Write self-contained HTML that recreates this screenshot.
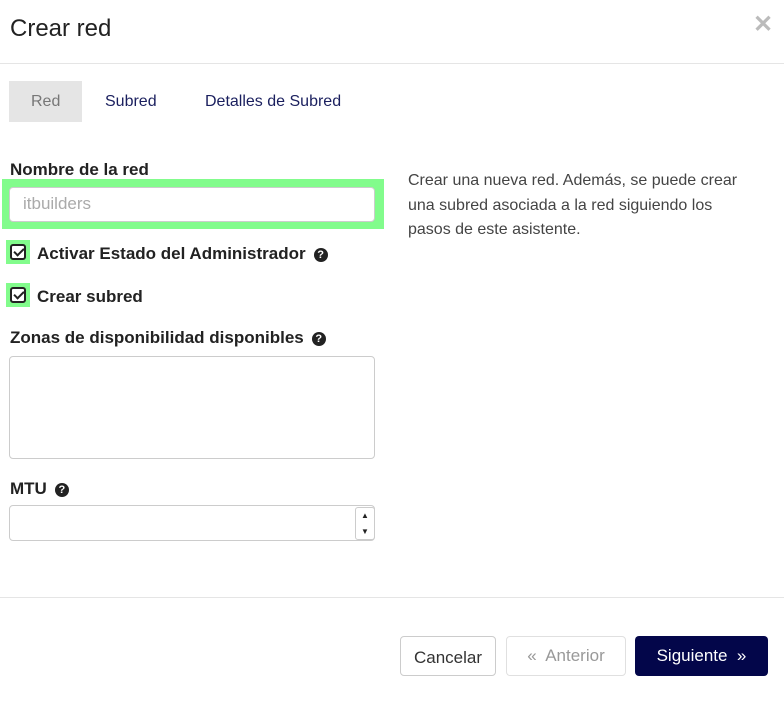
<!DOCTYPE html>
<html><head><meta charset="utf-8"><style>
*{box-sizing:border-box;margin:0;padding:0}
body{width:784px;height:707px;background:#fff;font-family:"Liberation Sans",sans-serif;color:#333;position:relative;overflow:hidden}
.a{position:absolute;white-space:nowrap}
.b{font-weight:bold;font-size:17px;color:#222}
.q{display:inline-block;width:14px;height:14px;border-radius:50%;background:#222;color:#fff;font-size:11px;font-weight:bold;text-align:center;line-height:14px;vertical-align:1px;margin-left:8px}
.cb{position:absolute;width:24px;height:24px;background:#82fc8c;}
.cb div{position:absolute;left:4px;top:4px;width:16px;height:16px;background:#fff;border:2px solid #222;border-radius:3px}
.cb div:after{content:"";position:absolute;left:4px;top:0px;width:4px;height:8px;border:solid #222;border-width:0 2px 2px 0;transform:rotate(45deg)}
</style></head><body>
<div class="a" style="left:10px;top:15px;font-size:24px;color:#222">Crear red</div>
<div class="a" style="left:753px;top:10px;font-size:24px;color:#bbb;font-weight:bold">✕</div>
<div class="a" style="left:0;top:63px;width:784px;height:1px;background:#e5e5e5"></div>
<div class="a" style="left:9px;top:81px;width:73px;height:41px;background:#e5e5e5"></div>
<div class="a" style="left:31px;top:93px;font-size:16px;color:#777">Red</div>
<div class="a" style="left:105px;top:93px;font-size:16px;color:#1a1f5e">Subred</div>
<div class="a" style="left:205px;top:93px;font-size:16px;color:#1a1f5e">Detalles de Subred</div>
<div class="a b" style="left:10px;top:160px">Nombre de la red</div>
<div class="a" style="left:2px;top:179px;width:382px;height:50px;background:#82fc8c"></div>
<div class="a" style="left:9px;top:187px;width:366px;height:35px;background:#fff;border:1px solid #ccc;border-radius:4px"></div>
<div class="a" style="left:23px;top:194px;font-size:17px;color:#aaa">itbuilders</div>
<div class="cb" style="left:6px;top:240px"><div></div></div>
<div class="a b" style="left:37px;top:244px">Activar Estado del Administrador<span class="q">?</span></div>
<div class="cb" style="left:6px;top:283px"><div></div></div>
<div class="a b" style="left:37px;top:287px">Crear subred</div>
<div class="a b" style="left:10px;top:328px">Zonas de disponibilidad disponibles<span class="q">?</span></div>
<div class="a" style="left:9px;top:356px;width:366px;height:103px;border:1px solid #ccc;border-radius:4px"></div>
<div class="a b" style="left:10px;top:479px">MTU<span class="q">?</span></div>
<div class="a" style="left:9px;top:505px;width:366px;height:36px;border:1px solid #ccc;border-radius:4px"></div>
<div class="a" style="left:355px;top:507px;width:20px;height:33px;border:1px solid #ccc;border-radius:3px;font-size:8px;text-align:center;line-height:16px;color:#222">▲<br>▼</div>
<div class="a" style="left:408px;top:169px;font-size:16px;line-height:24.5px;color:#444">Crear una nueva red. Además, se puede crear<br>una subred asociada a la red siguiendo los<br>pasos de este asistente.</div>
<div class="a" style="left:0;top:597px;width:784px;height:1px;background:#e5e5e5"></div>
<div class="a" style="left:400px;top:636px;width:96px;height:40px;border:1px solid #ccc;border-radius:4px;font-size:17px;color:#333;text-align:center;line-height:42px">Cancelar</div>
<div class="a" style="left:506px;top:636px;width:120px;height:40px;border:1px solid #e0e0e0;border-radius:4px;font-size:17px;color:#999;text-align:center;line-height:38px">«&nbsp; Anterior</div>
<div class="a" style="left:635px;top:636px;width:133px;height:40px;background:#03064a;border-radius:4px;font-size:17px;color:#fff;text-align:center;line-height:40px">Siguiente &nbsp;»</div>
</body></html>
